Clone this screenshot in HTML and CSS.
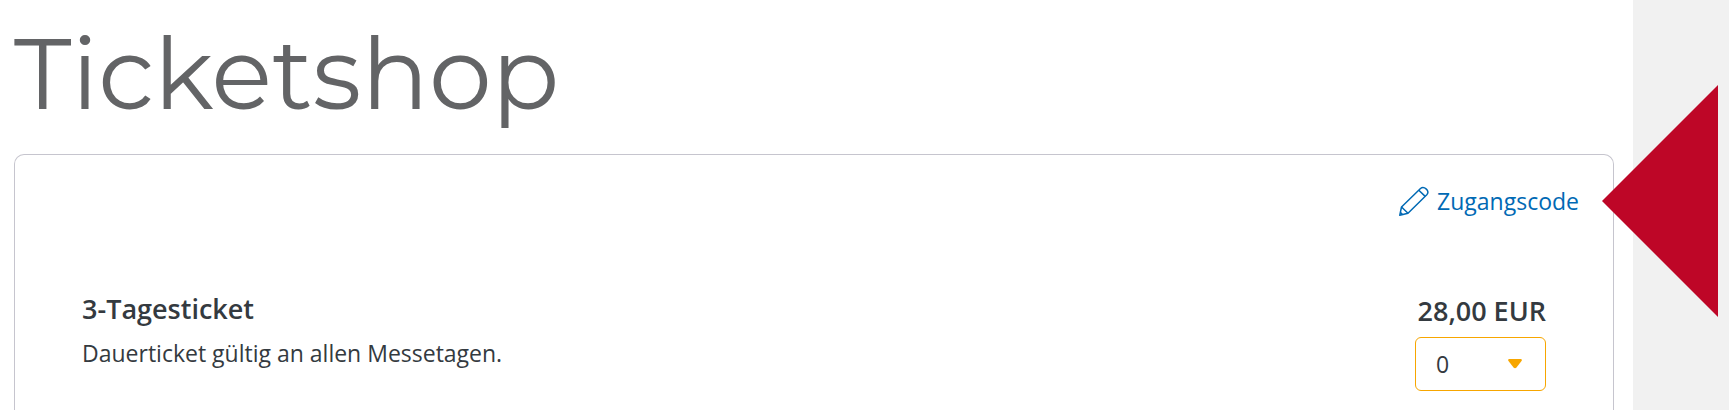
FILE: index.html
```html
<!DOCTYPE html>
<html lang="de">
<head>
    <meta charset="UTF-8">
    <meta name="viewport" content="width=device-width, initial-scale=1.0">
    <title>Ticketshop</title>
    <link rel="stylesheet" href="styles.css">
</head>
<body>
    <main class="page">
        <h1>Ticketshop</h1>

        <section class="card">
            <div class="toolbar">
                <a class="code-link" href="#code">
                    <svg class="icon-pencil" viewBox="0 0 30 30" aria-hidden="true">
                        <path d="M.8 29.200 2.500 21 21.500 2.500C25-.5 31.500 5 27.800 8.800L9 27.200Z"/>
                        <path d="M2.500 21 9 27.200M19.800 4.200 26.200 10.400M1.500 26.500 3.500 28.500"/>
                    </svg>
                    <span>Zugangscode</span>
                </a>
                <svg class="pointer" viewBox="0 0 116 232" aria-hidden="true">
                    <path d="M0 116 116 0V232Z"/>
                </svg>
            </div>

            <div class="ticket">
                <div class="ticket-info">
                    <h2>3-Tagesticket</h2>
                    <p>Dauerticket gültig an allen Messetagen.</p>
                </div>
                <div class="ticket-order">
                    <label class="price" for="amount">28,00 EUR</label>
                    <div class="select-box">
                        <select id="amount">
                            <option>0</option>
                            <option>1</option>
                            <option>2</option>
                            <option>3</option>
                        </select>
                        <svg class="caret" viewBox="0 0 14 10" aria-hidden="true">
                            <path d="M1 0H13Q14.500 .5 13.500 2L8.500 8.500Q7 10 5.500 8.500L.5 2Q-.5 .5 1 0Z"/>
                        </svg>
                    </div>
                </div>
            </div>
        </section>
    </main>
</body>
</html>
```

FILE: styles.css
```css
* {
    box-sizing: border-box;
}
body {
    margin: 0;
    background-color: #f1f1f1;
    color: #343a40;
    font-family: "Open Sans", sans-serif;
    font-size: 23px;
    line-height: 36px;
}
.page {
    display: flex;
    flex-direction: column;
    min-height: 100vh;
    margin-right: 96px;
    padding: 16px 19px 0 14px;
    background-color: #fff;
}
h1 {
    margin: 0 0 24px;
    color: #636466;
    font-family: Montserrat, Inter, sans-serif;
    font-size: 100px;
    font-weight: 400;
    line-height: 114px;
}
.card {
    flex: 1;
    padding: 28px 34px 0;
    border: 1px solid #c6c5ce;
    border-bottom: none;
    border-radius: 10px 10px 0 0;
}
.toolbar {
    position: relative;
    display: flex;
    justify-content: flex-end;
}
.code-link {
    display: flex;
    align-items: center;
    gap: 8px;
    color: #0069b4;
    text-decoration: none;
}
.icon-pencil {
    width: 30px;
    height: 30px;
    fill: none;
    stroke: #0069b4;
    stroke-width: 1.5;
    stroke-linejoin: round;
}
/* red arrow that points at the link */
.pointer {
    position: absolute;
    top: 50%;
    left: 100%;
    width: 116px;
    height: 232px;
    margin: -116px 0 0 23px;
    fill: #be0627;
}
.ticket {
    display: flex;
    justify-content: space-between;
    padding: 72px 33px 0;
}
h2 {
    margin: 0 0 8px;
    font-size: 27px;
    font-weight: 600;
    line-height: 36px;
}
p {
    margin: 0;
}
.ticket-order {
    display: flex;
    flex-direction: column;
    align-items: flex-end;
    gap: 8px;
    padding-top: 2px;
}
.price {
    font-size: 27px;
    font-weight: 600;
}
.select-box {
    position: relative;
}
select {
    display: block;
    width: 131px;
    height: 54px;
    padding: 0 20px;
    border: 1px solid #f7a600;
    border-radius: 6px;
    background-color: #fff;
    color: #343a40;
    font: inherit;
    appearance: none;
}
.caret {
    position: absolute;
    top: 22px;
    right: 24px;
    width: 14px;
    height: 10px;
    fill: #f7a600;
    pointer-events: none;
}
```
